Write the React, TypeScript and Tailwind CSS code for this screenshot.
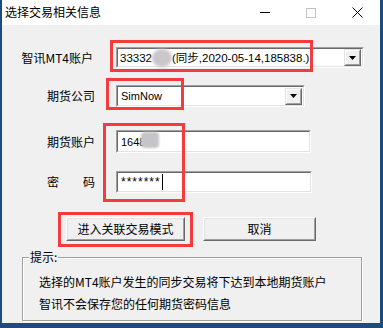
import React from "react";

const cjk = "font-['Noto_Sans_CJK_SC',sans-serif]";
const latin = "font-['Liberation_Sans','Noto_Sans_CJK_SC',sans-serif]";

function Arrow() {
  return (
    <svg width="7" height="4" viewBox="0 0 7 4" className="block">
      <path d="M0 0h7L3.5 4z" fill="#000" />
    </svg>
  );
}

function DropButton() {
  return (
    <div className="w-[17px] h-[17px] mr-px border border-t-[#e3e3e3] border-l-[#e3e3e3] border-b-[#696969] border-r-[#696969]">
      <div className="h-full border border-t-white border-l-white border-b-[#a0a0a0] border-r-[#a0a0a0] bg-[#f0f0f0] flex items-center justify-center">
        <Arrow />
      </div>
    </div>
  );
}

function Sunken({ className, children }: { className: string; children: React.ReactNode }) {
  return (
    <div className={`border border-t-[#a0a0a0] border-l-[#a0a0a0] border-b-white border-r-white ${className}`}>
      <div className="h-full border border-t-[#696969] border-l-[#696969] border-b-[#e3e3e3] border-r-[#e3e3e3] bg-white flex items-center">
        {children}
      </div>
    </div>
  );
}

function PushButton({ className, children }: { className: string; children: React.ReactNode }) {
  return (
    <div className={`border border-t-white border-l-white border-b-[#696969] border-r-[#696969] ${className}`}>
      <div className="h-full border border-t-[#e3e3e3] border-l-[#e3e3e3] border-b-[#a0a0a0] border-r-[#a0a0a0] bg-[#f0f0f0] flex items-center justify-center leading-[14px]">
        {children}
      </div>
    </div>
  );
}

export default function App() {
  return (
    <div className={`w-[383px] h-[328px] bg-[#1a4c80] overflow-hidden text-[12px] text-black ${cjk}`}>
      <div className="ml-[2px] w-[378px] h-[323px] flex flex-col">
        {/* title bar */}
        <div className="h-[25px] bg-white flex items-center">
          <div className="pl-[3px] flex-1 leading-[14px] -mt-[1px]">选择交易相关信息</div>
          <div className="w-[46px] flex justify-center">
            <div className="w-[10px] h-px bg-black" />
          </div>
          <div className="w-[46px] flex justify-center">
            <div className="w-[10px] h-[10px] border border-[#c4c4c4]" />
          </div>
          <div className="w-[46px] flex justify-center">
            <svg width="11" height="11" viewBox="0 0 11 11">
              <path d="M0.5 0.5l10 10M10.5 0.5l-10 10" stroke="#000" strokeWidth="1" />
            </svg>
          </div>
        </div>

        {/* body */}
        <div className="relative flex-1 bg-[#f0f0f0] flex flex-col pt-[22px]">
          <div className="flex items-center h-[21px]">
            <div className="w-[114px] pr-[23px] text-right leading-[14px]">智讯MT4账户</div>
            <Sunken className="w-[248px] h-[21px]">
              <div className={`flex-1 pl-[2px] text-[11.5px] leading-[14px] whitespace-nowrap flex items-center ${latin}`}>
                <span>33332</span>
                <span className="inline-block w-[20px] h-[18px] rounded-full bg-[#c9c7ca] blur-[1.5px]" />
                <span>(同步,2020-05-14,185838.)</span>
              </div>
              <DropButton />
            </Sunken>
          </div>

          <div className="flex items-center h-[22px] mt-[17px]">
            <div className="w-[114px] pr-[21px] text-right leading-[14px]">期货公司</div>
            <Sunken className="w-[189px] h-[22px]">
              <div className={`flex-1 pl-[3px] text-[11px] leading-[14px] ${latin}`}>SimNow</div>
              <DropButton />
            </Sunken>
          </div>

          <div className="flex items-center h-[23px] mt-[23px]">
            <div className="w-[114px] pr-[21px] text-right leading-[14px]">期货账户</div>
            <Sunken className="w-[195px] h-[23px]">
              <div className={`pl-[3px] text-[11px] leading-[14px] flex items-center ${latin}`}>
                <span>1648</span>
                <span className="inline-block -ml-[4px] w-[18px] h-[16px] rounded-[4px] bg-[#c6c4c6] blur-[1px] -mt-[4px]" />
              </div>
            </Sunken>
          </div>

          <div className="flex items-center h-[22px] mt-[18px]">
            <div className="w-[114px] pr-[21px] leading-[14px] flex justify-end">
              <span className="w-[48px] flex justify-between">
                <span>密</span>
                <span>码</span>
              </span>
            </div>
            <Sunken className="w-[196px] h-[22px]">
              <div className={`pl-[3px] text-[12px] leading-[14px] flex items-center ${latin}`}>
                <span className="tracking-[1px]">*******</span>
                <span className="w-px h-[16px] bg-black ml-px" />
              </div>
            </Sunken>
          </div>

          <div className="flex mt-[24px] pl-[64px] gap-[18px]">
            <PushButton className="w-[119px] h-[24px]">进入关联交易模式</PushButton>
            <PushButton className="w-[113px] h-[24px]">取消</PushButton>
          </div>

          <div className="relative ml-[20px] mt-[16px] w-[340px] h-[64px] border border-[#a0a0a0] shadow-[inset_1px_1px_0_#fff,1px_1px_0_#fff] pl-[16px] pt-[17px] leading-[14px]">
            <div className="absolute left-[6px] -top-[8px] px-[1px] bg-[#f0f0f0]">提示:</div>
            <div>选择的MT4账户发生的同步交易将下达到本地期货账户</div>
            <div className="mt-[8px]">智讯不会保存您的任何期货密码信息</div>
          </div>

          {/* annotation boxes */}
          <div className="absolute left-[108px] top-[15px] w-[203px] h-[32px] border-[3px] border-[#f53c3c]" />
          <div className="absolute left-[104px] top-[53px] w-[78px] h-[32px] border-[3px] border-[#f53c3c]" />
          <div className="absolute left-[101px] top-[98px] w-[82px] h-[79px] border-[3px] border-[#f53c3c]" />
          <div className="absolute left-[56px] top-[187px] w-[135px] h-[35px] border-[3px] border-[#f53c3c]" />
        </div>
      </div>
    </div>
  );
}
